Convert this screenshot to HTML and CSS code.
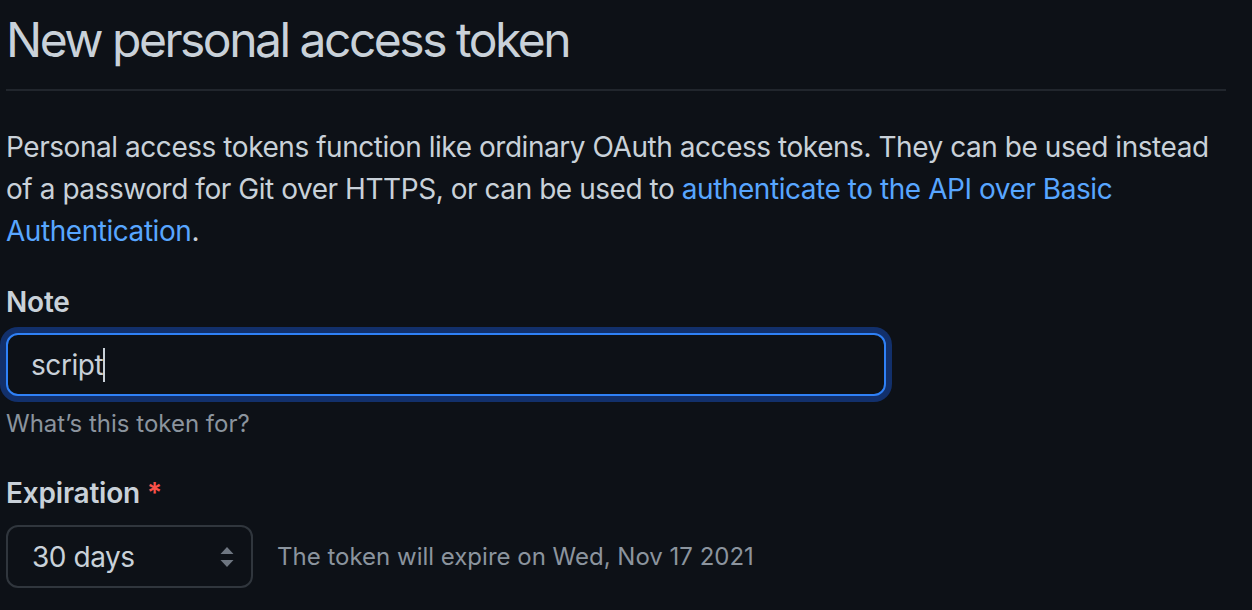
FILE: index.html
```html
<!DOCTYPE html>
<html lang="en">
<head>
<meta charset="utf-8">
<title>New personal access token</title>
<link rel="stylesheet" href="styles.css">
</head>
<body>
<main class="page">
  <div class="subhead">
    <h2 class="subhead-heading">New personal access token</h2>
  </div>
  <p class="intro">Personal access tokens function like ordinary OAuth access tokens. They can be used instead of a password for Git over HTTPS, or can be used to <a href="#" class="link">authenticate to the API over Basic Authentication</a>.</p>

  <div class="form-group">
    <label class="label" for="note">Note</label>
    <div class="input focused"><span class="value">script</span><span class="caret"></span></div>
    <p class="note">What’s this token for?</p>
  </div>

  <div class="form-group">
    <label class="label label-spaced">Expiration <span class="required">*</span></label>
    <div class="expiry-row">
      <div class="select">
        <span class="value">30 days</span>
        <svg class="arrows" width="16" height="24" viewBox="0 0 16 24"><path d="M8 2 L14.5 9 H1.5 Z M8 22 L14.5 15 H1.5 Z" fill="#6e7681"/></svg>
      </div>
      <span class="expiry-note">The token will expire on Wed, Nov 17 2021</span>
    </div>
  </div>
</main>
</body>
</html>
```
FILE: styles.css
```css
* { box-sizing: border-box; }
html, body {
  margin: 0;
  background: #0d1117;
}
body {
  font-family: Inter, "Noto Sans", "Liberation Sans", sans-serif;
  color: #c9d1d9;
  font-size: 28px;
  line-height: 42px;
  letter-spacing: -0.45px;
}
.page {
  padding: 0 26px 0 6px;
  overflow: hidden;
  height: 610px;
}
.subhead {
  border-bottom: 2px solid #21262d;
  padding-top: 8px;
  padding-bottom: 17px;
  margin-bottom: 35px;
}
.subhead-heading {
  margin: 0;
  font-size: 48px;
  line-height: 64px;
  font-weight: 400;
  letter-spacing: -2.5px;
  color: #c9d1d9;
}
.intro {
  margin: 0 0 29px;
}
.link {
  color: #58a6ff;
  text-decoration: none;
}
.form-group {
  margin-bottom: 30px;
}
.label {
  display: block;
  font-weight: 600;
  line-height: 42px;
  margin-bottom: 10px;
  letter-spacing: -0.2px;
}
.label-spaced {
  margin-bottom: 11px;
}
.required {
  color: #f85149;
}
.input {
  width: 880px;
  height: 63px;
  display: flex;
  align-items: center;
  padding: 0 23px;
  border: 2px solid #2f81f7;
  border-radius: 12px;
  box-shadow: 0 0 0 6px #12306b;
  background: #0d1117;
}
.caret {
  display: inline-block;
  width: 2px;
  height: 34px;
  background: #c9d1d9;
}
.note {
  margin: 10px 0 0;
  font-size: 24px;
  line-height: 36px;
  letter-spacing: 0;
  color: #8b949e;
}
.expiry-row {
  display: flex;
  align-items: center;
  gap: 24px;
}
.select {
  width: 247px;
  height: 63px;
  display: flex;
  align-items: center;
  justify-content: space-between;
  padding: 0 16px 0 24px;
  border: 2px solid #30363d;
  border-radius: 12px;
  background: #0d1117;
}
.arrows { display: block; }
.expiry-note {
  font-size: 24px;
  letter-spacing: 0;
  color: #8b949e;
}
```
